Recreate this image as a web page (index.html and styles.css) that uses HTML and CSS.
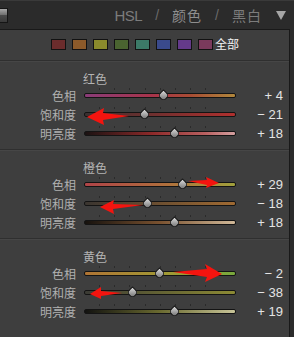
FILE: index.html
```html
<!DOCTYPE html>
<html lang="zh">

<head>
  <meta charset="UTF-8" />
  <title>HSL</title>
  <link rel="stylesheet" href="styles.css">
</head>

<body>
  <div class="app">
    <div class="header">
      <span class="grip"></span>
      <div class="tabs">
        <span class="tab">HSL</span>
        <span class="slash">/</span>
        <span class="tab cn active">颜色</span>
        <span class="slash">/</span>
        <span class="tab cn">黑白</span>
        <span class="caret"></span>
      </div>
    </div>

    <div class="panel">
      <div class="swatches">
        <span class="swatch red"></span>
        <span class="swatch orange"></span>
        <span class="swatch yellow"></span>
        <span class="swatch green"></span>
        <span class="swatch aqua"></span>
        <span class="swatch blue"></span>
        <span class="swatch purple"></span>
        <span class="swatch magenta"></span>
        <span class="all">全部</span>
      </div>

      <section class="group">
        <div class="group_title">红色</div>
        <div class="row">
          <span class="label">色相</span>
          <div class="track red_hue"><span class="thumb" style="left: 52%"></span></div>
          <span class="value">+ 4</span>
        </div>
        <div class="row">
          <span class="label">饱和度</span>
          <div class="track red_sat"><span class="thumb" style="left: 39.5%"></span></div>
          <span class="value">&minus; 21</span>
        </div>
        <div class="row">
          <span class="label">明亮度</span>
          <div class="track red_lum"><span class="thumb" style="left: 59%"></span></div>
          <span class="value">+ 18</span>
        </div>
      </section>

      <section class="group">
        <div class="group_title">橙色</div>
        <div class="row">
          <span class="label">色相</span>
          <div class="track orange_hue"><span class="thumb" style="left: 64.5%"></span></div>
          <span class="value">+ 29</span>
        </div>
        <div class="row">
          <span class="label">饱和度</span>
          <div class="track orange_sat"><span class="thumb" style="left: 41%"></span></div>
          <span class="value">&minus; 18</span>
        </div>
        <div class="row">
          <span class="label">明亮度</span>
          <div class="track orange_lum"><span class="thumb" style="left: 59%"></span></div>
          <span class="value">+ 18</span>
        </div>
      </section>

      <section class="group">
        <div class="group_title">黄色</div>
        <div class="row">
          <span class="label">色相</span>
          <div class="track yellow_hue"><span class="thumb" style="left: 49%"></span></div>
          <span class="value">&minus; 2</span>
        </div>
        <div class="row">
          <span class="label">饱和度</span>
          <div class="track yellow_sat"><span class="thumb" style="left: 31%"></span></div>
          <span class="value">&minus; 38</span>
        </div>
        <div class="row">
          <span class="label">明亮度</span>
          <div class="track yellow_lum"><span class="thumb" style="left: 59.5%"></span></div>
          <span class="value">+ 19</span>
        </div>
      </section>
    </div>

    <!-- red annotation arrows drawn over the screenshot -->
    <svg class="arrows" width="294" height="337" viewBox="0 0 294 337">
      <polygon points="129,116 103,113 104,108 87,117 104,125 103,120" />
      <polygon points="188,181 207,180 206,177 219,183 206,188 207,185" />
      <polygon points="143,205 113,204 114,200 100,207 114,214 113,209" />
      <polygon points="173,272 207,269 205,264 222,274 205,282 207,277" />
      <polygon points="122,293 101,291 101,287 90,294 101,299 101,296" />
    </svg>
  </div>
</body>

</html>
```

FILE: styles.css
```css
body {
  margin: 0;
  padding: 0;
  background-color: #2b2b2b;
}

.app {
  position: relative;
  width: 294px;
  height: 337px;
  overflow: hidden;
  background-color: #2b2b2b;
  font-family: "Noto Sans CJK SC", sans-serif;
}

.header {
  height: 28px;
  border-top: 1px solid #3a3a3a;
  display: flex;
  align-items: center;
}

.grip {
  width: 7px;
  height: 13px;
  margin-top: 1px;
  border: 1px solid #151515;
  border-left: none;
  background: linear-gradient(#a8a8a8, #6a6a6a 50%, #4a4a4a 50%, #3a3a3a);
}

.tabs {
  margin-left: auto;
  margin-right: 8px;
  display: flex;
  align-items: center;
  color: #7c7c7c;
}

.tab {
  font-family: "Liberation Sans", sans-serif;
  font-size: 15px;
  letter-spacing: -0.5px;
}

.tab.cn {
  font-family: "Noto Sans CJK SC", sans-serif;
  font-size: 14px;
  letter-spacing: 1px;
}

.tab.active {
  color: #8e8e8e;
}

.slash {
  font-family: "Liberation Sans", sans-serif;
  font-size: 14px;
  margin: 0 13px;
  color: #6a6a6a;
}

.caret {
  margin-left: 14px;
  width: 0;
  height: 0;
  border-left: 5px solid transparent;
  border-right: 5px solid transparent;
  border-top: 9px solid #a6a6a6;
}

.panel {
  margin-right: 4px;
  height: 310px;
  border-top: 1px solid #191919;
  border-right: 1px solid #191919;
  background-color: #3e3e3e;
}

.swatches {
  height: 30px;
  padding-left: 51px;
  display: flex;
  align-items: flex-start;
  gap: 6px;
  box-sizing: border-box;
  padding-top: 9px;
}

.swatch {
  width: 13px;
  height: 9px;
  border: 1px solid #121212;
}

.red { background-color: #6b2c2c; }
.orange { background-color: #8c5a2a; }
.yellow { background-color: #8a8a2c; }
.green { background-color: #4a6430; }
.aqua { background-color: #3c7a68; }
.blue { background-color: #3a4a8c; }
.purple { background-color: #643a8a; }
.magenta { background-color: #7a3a5c; }

.all {
  margin-left: -4px;
  margin-top: -3px;
  font-size: 12px;
  line-height: 16px;
  color: #f2f2f2;
}

.group {
  height: 89px;
  padding-top: 10px;
  box-sizing: border-box;
  border-top: 1px solid #2f2f2f;
  box-shadow: inset 0 1px 0 #464646;
}

.group_title {
  padding-left: 83px;
  font-size: 12px;
  line-height: 15px;
  color: #b4b4b4;
}

.row {
  display: grid;
  grid-template-columns: 76px 152px 39px;
  column-gap: 8px;
  align-items: center;
  height: 19px;
}

.label {
  text-align: right;
  font-size: 12px;
  color: #b0b0b0;
}

.value {
  text-align: right;
  font-family: "Liberation Sans", sans-serif;
  font-size: 13px;
  color: #e4e4e4;
}

.track {
  position: relative;
  height: 3px;
  border: 1px solid #141414;
  border-radius: 2px;
}

.track::before {
  content: "";
  position: absolute;
  left: 14px;
  right: 14px;
  top: -6px;
  height: 2px;
  background: repeating-linear-gradient(90deg, #2a2a2a 0 1px, transparent 1px 15.2px);
}

.thumb {
  position: absolute;
  top: -3px;
  width: 7px;
  height: 7px;
  margin-left: -4px;
  border: 1px solid #1e1e1e;
  border-radius: 0 50% 50% 50%;
  transform: rotate(45deg);
  background: linear-gradient(135deg, #dcdcdc, #9a9a9a 60%, #6e6e6e);
}

.red_hue { background: linear-gradient(90deg, #8a3c78, #a8344a 45%, #a84c34 70%, #b0873c); }
.red_sat { background: linear-gradient(90deg, #3a3030, #b0302e); }
.red_lum { background: linear-gradient(90deg, #1a1212, #8e2a2a 45%, #b86060 80%, #d4a0a0); }

.orange_hue { background: linear-gradient(90deg, #b04448, #b0703c 55%, #a0a03c); }
.orange_sat { background: linear-gradient(90deg, #3a3530, #a06a32); }
.orange_lum { background: linear-gradient(90deg, #16120e, #7a5230 50%, #d0b898); }

.yellow_hue { background: linear-gradient(90deg, #b07434, #a09a34 55%, #78a83c); }
.yellow_sat { background: linear-gradient(90deg, #3a3a34, #8c8a34); }
.yellow_lum { background: linear-gradient(90deg, #121210, #6a6a30 50%, #c8c498); }

.arrows {
  position: absolute;
  top: 0;
  left: 0;
  fill: #f4140f;
  pointer-events: none;
}
```
